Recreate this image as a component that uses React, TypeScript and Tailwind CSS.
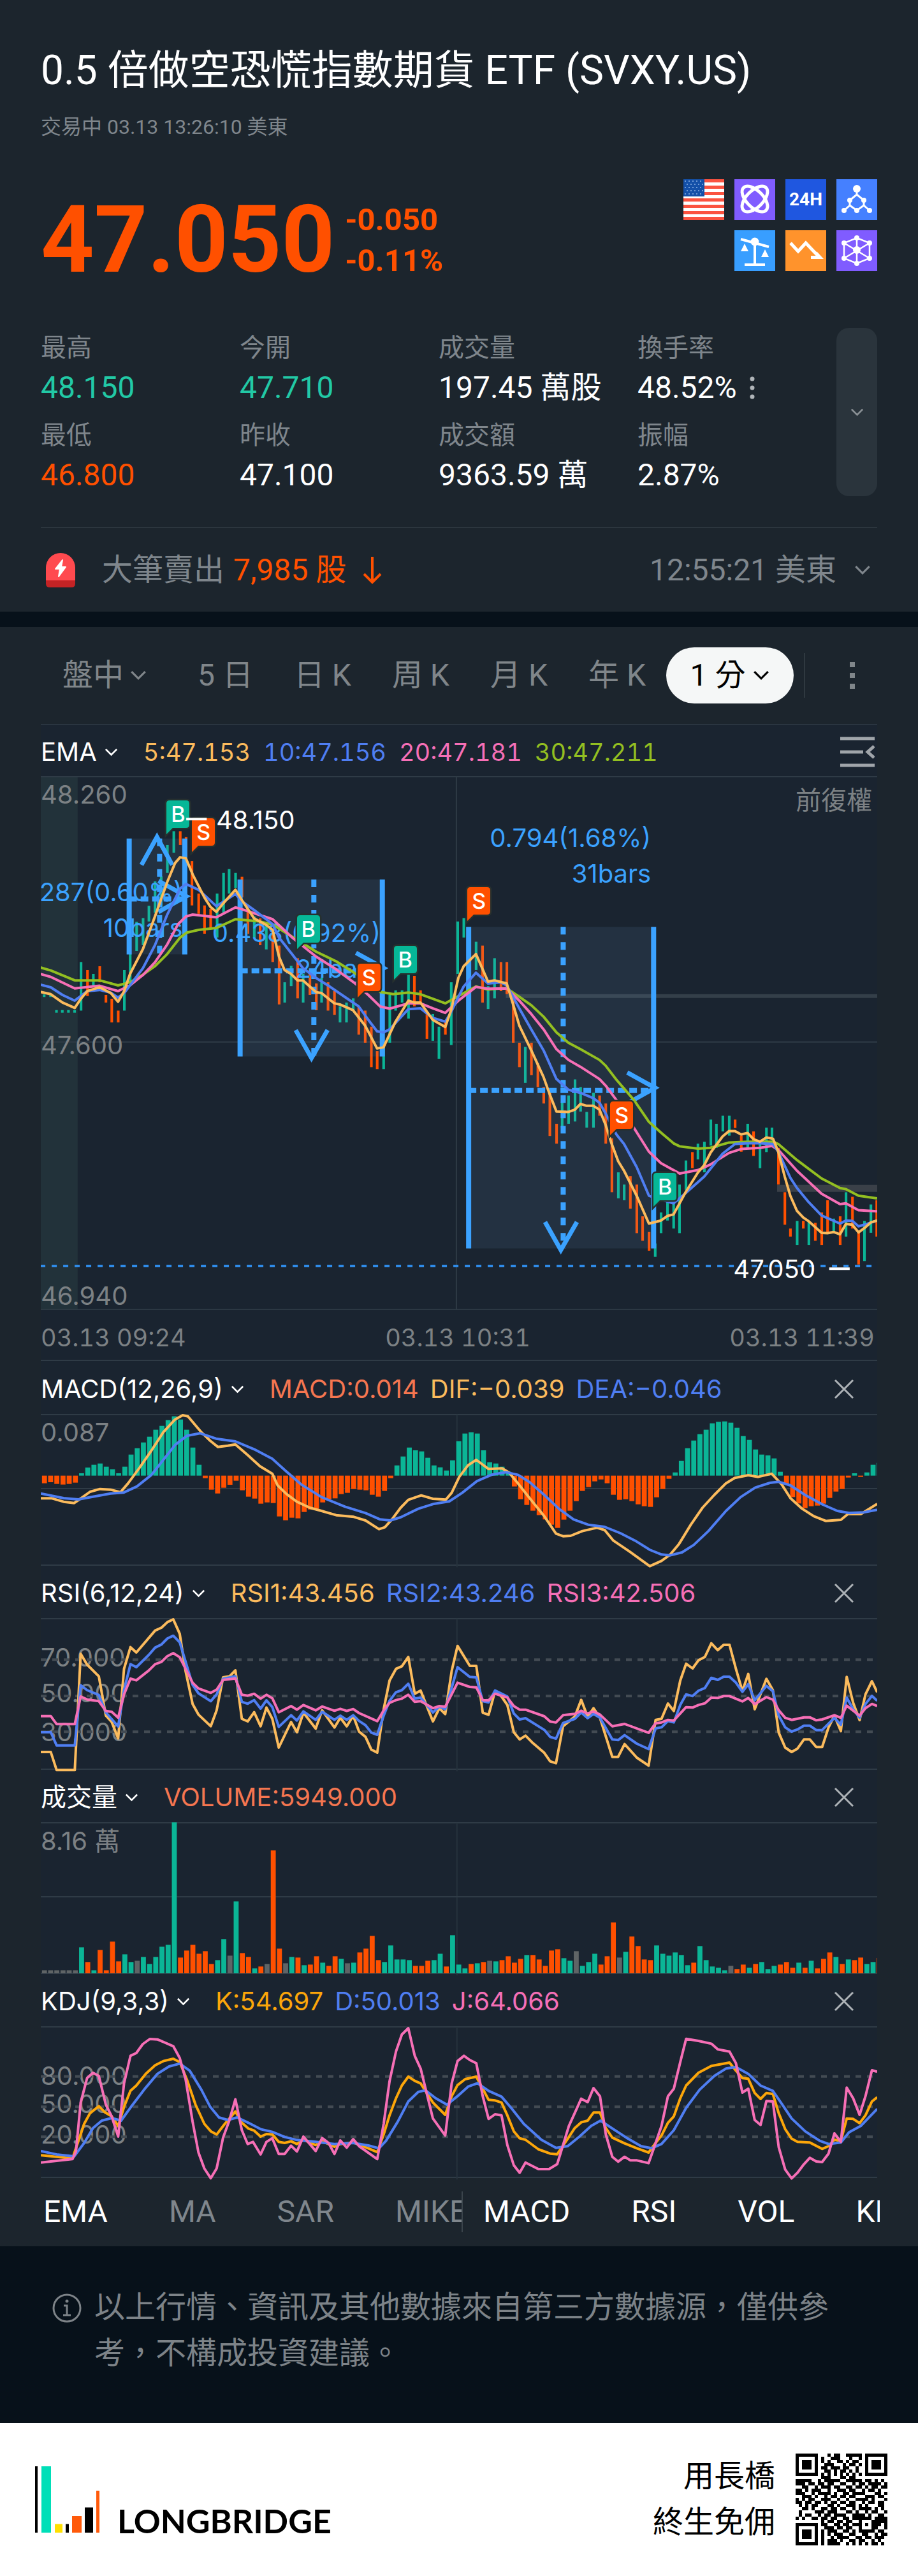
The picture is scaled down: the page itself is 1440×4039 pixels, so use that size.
import { ReactNode } from "react";

const UP = "#0bb596";
const DOWN = "#ff5000";
const FLAT = "#5f6466";
const YELLOW = "#fbbb5d";
const BLUE = "#4f7ef2";
const PINK = "#f66fb6";
const GREEN = "#93bf21";
const ORANGE = "#fca60a";
const MEASURE = "#3ba2ff";
const GRID = "#2f3b46";

// [x, high, low], positive direction first
const upBars: number[][] = [
  [278, 514, 641], [320, 545, 578], [426, 535, 641], [446, 493, 570], [468, 409, 485], [490, 399, 470],
  [510, 367, 408], [531, 303, 385], [552, 290, 370], [573, 208, 281], [595, 172, 228], [743, 335, 450],
  [765, 281, 388], [784, 271, 335], [806, 281, 320], [870, 395, 450], [911, 415, 481], [974, 567, 620],
  [996, 524, 577], [1037, 545, 620], [1100, 555, 620], [1163, 630, 672], [1185, 620, 672], [1208, 609, 640],
  [1312, 735, 794], [1333, 600, 725], [1353, 588, 641], [1375, 588, 620], [1397, 545, 662], [1480, 650, 720],
  [1501, 683, 767], [1543, 567, 731], [1565, 408, 545], [1586, 399, 450], [1628, 461, 535], [1669, 577, 637],
  [1691, 504, 609], [1796, 736, 830], [1922, 880, 948], [1944, 863, 937], [1966, 821, 931], [1985, 841, 905],
  [2006, 906, 947], [2029, 856, 947], [2114, 1064, 1132], [2134, 1096, 1137], [2240, 1250, 1285],
  [2260, 1169, 1223], [2282, 1140, 1190], [2303, 1140, 1211], [2323, 1096, 1223], [2345, 1033, 1110],
  [2386, 989, 1030], [2408, 984, 1064], [2430, 926, 994], [2449, 937, 1000], [2471, 916, 957],
  [2493, 916, 968], [2556, 937, 1000], [2598, 989, 1053], [2620, 947, 1011], [2639, 947, 980],
  [2725, 1191, 1254], [2765, 1191, 1254], [2850, 1185, 1220], [2892, 1116, 1232], [2955, 1191, 1296],
  [2977, 1148, 1222],
];
const downBars: number[][] = [
  [300, 535, 603], [342, 525, 567], [363, 600, 620], [383, 610, 672], [405, 641, 672], [617, 172, 208],
  [637, 187, 240], [657, 250, 366], [680, 335, 388], [700, 366, 440], [721, 375, 425], [828, 291, 345],
  [848, 375, 440], [890, 400, 470], [933, 440, 514], [955, 471, 625], [1018, 504, 609], [1060, 535, 600],
  [1082, 570, 640], [1122, 567, 641], [1144, 590, 652], [1227, 630, 704], [1249, 641, 725], [1270, 683, 789],
  [1290, 747, 794], [1417, 550, 630], [1438, 588, 620], [1460, 645, 715], [1523, 670, 704], [1650, 471, 620],
  [1713, 514, 590], [1733, 514, 598], [1755, 609, 725], [1776, 725, 789], [1817, 725, 810], [1839, 779, 841],
  [1859, 841, 884], [1880, 850, 969], [1903, 937, 989], [2050, 863, 916], [2071, 884, 989],
  [2092, 975, 1116], [2155, 1074, 1159], [2177, 1096, 1223], [2197, 1179, 1243], [2219, 1220, 1269],
  [2367, 1011, 1053], [2513, 926, 948], [2534, 968, 1010], [2576, 957, 1021], [2661, 1000, 1096],
  [2683, 1116, 1201], [2702, 1211, 1232], [2746, 1191, 1211], [2787, 1196, 1243], [2809, 1169, 1254],
  [2829, 1137, 1222], [2872, 1179, 1254], [2914, 1128, 1211], [2935, 1222, 1305], [2997, 1137, 1232],
];

const ema5 =
  "139,592 175,598 215,620 257,634 278,610 300,590 342,580 380,595 405,618 426,590 446,545 490,480 531,395 573,305 600,255 617,240 637,243 660,285 700,345 721,370 741,383 765,360 806,325 828,352 870,400 911,417 933,430 955,500 974,535 996,545 1018,562 1037,562 1082,593 1100,595 1144,622 1163,625 1208,640 1249,680 1290,740 1312,737 1353,670 1397,615 1417,620 1438,620 1480,665 1523,684 1543,640 1568,555 1586,525 1628,493 1669,565 1691,562 1733,570 1755,625 1776,680 1817,745 1859,815 1880,860 1903,905 1944,906 1966,900 1985,885 2006,890 2029,890 2050,900 2071,940 2092,990 2114,1035 2134,1060 2177,1125 2219,1198 2260,1190 2282,1178 2303,1174 2345,1115 2386,1065 2408,1045 2430,1012 2471,970 2493,956 2513,956 2534,965 2556,961 2576,977 2598,984 2620,973 2643,976 2661,1010 2683,1075 2702,1125 2725,1165 2746,1182 2765,1192 2809,1222 2829,1223 2850,1220 2872,1226 2892,1199 2914,1201 2935,1221 2955,1210 2977,1195 2999,1190";
const ema10 =
  "139,573 175,580 215,600 257,615 300,590 342,587 380,594 405,607 426,595 490,530 531,470 573,390 617,322 637,310 680,325 741,368 806,336 828,355 870,378 933,415 955,450 996,490 1037,530 1082,556 1122,575 1185,608 1227,630 1260,665 1290,695 1312,698 1333,690 1397,637 1438,635 1480,660 1523,670 1543,645 1568,605 1586,578 1628,542 1669,570 1713,567 1733,575 1776,635 1817,690 1859,745 1903,820 1944,848 1985,856 2029,870 2050,882 2071,910 2108,965 2134,990 2177,1050 2219,1125 2260,1135 2303,1145 2345,1118 2408,1075 2471,1015 2513,990 2556,988 2598,988 2643,990 2661,1010 2702,1078 2725,1105 2765,1142 2809,1177 2872,1198 2892,1190 2914,1191 2935,1205 2955,1201 2999,1190";
const ema20 =
  "139,545 175,553 257,583 342,576 405,590 446,575 490,548 531,515 573,468 610,415 637,395 660,390 741,397 806,371 828,376 933,402 1000,450 1082,500 1144,530 1215,570 1260,600 1300,630 1333,636 1397,622 1438,622 1480,635 1523,647 1568,615 1628,579 1669,584 1733,583 1776,615 1817,650 1859,690 1903,742 1944,770 1985,788 2050,820 2071,837 2108,875 2168,948 2219,1010 2260,1040 2324,1067 2387,1058 2428,1044 2493,1013 2534,1003 2598,1000 2639,995 2661,1005 2725,1060 2809,1120 2872,1147 2892,1145 2935,1163 2999,1166";
const ema30 =
  "139,528 175,536 257,562 342,562 405,575 446,567 490,547 531,525 573,493 617,450 640,437 680,430 741,425 806,402 890,408 933,416 1000,448 1082,487 1150,512 1208,540 1300,592 1345,598 1397,594 1438,598 1523,622 1568,603 1628,578 1669,586 1713,583 1733,583 1776,605 1817,627 1859,657 1903,698 1944,725 1985,742 2050,770 2071,785 2108,822 2168,875 2219,932 2260,960 2303,988 2324,996 2387,1002 2428,1000 2493,986 2556,984 2643,984 2661,990 2725,1032 2809,1080 2872,1105 2892,1108 2935,1125 2999,1132";

const macdBars = [
  585, 580, 588, 591, 588, 582, 538, 511, 498, 492, 507, 519, 538, 507, 450, 420, 393, 366, 333, 315, 288, 270,
  285, 333, 417, 498, 561, 615, 633, 606, 592, 573, 618, 648, 657, 681, 675, 678, 741, 759, 747, 750, 720, 708,
  705, 675, 660, 656, 636, 630, 612, 615, 618, 639, 648, 621, 561, 501, 459, 417, 430, 435, 465, 501, 510, 525,
  477, 387, 351, 345, 351, 430, 486, 492, 507, 530, 600, 660, 687, 714, 735, 755, 780, 795, 756, 714, 669, 621,
  603, 576, 567, 585, 639, 663, 660, 669, 684, 693, 696, 651, 612, 564, 534, 480, 420, 384, 354, 333, 303, 296,
  294, 300, 324, 363, 381, 426, 450, 454, 468, 531, 590, 650, 680, 702, 693, 690, 681, 654, 624, 612, 558, 538,
  555, 534, 498, 489,
];
const dif =
  "71,656 90,656 110,672 128,678 140,655 155,625 172,612 190,615 207,627 220,585 240,510 260,430 280,345 300,285 313,265 322,270 345,345 360,385 373,414 390,408 403,402 425,455 445,505 466,540 475,595 490,635 508,672 530,700 550,715 575,735 605,743 625,760 648,801 658,792 670,755 685,700 698,663 720,642 740,658 762,662 772,630 785,555 800,500 814,475 835,518 858,515 870,535 885,585 905,655 930,740 950,822 962,834 975,832 995,810 1020,794 1033,805 1048,855 1075,905 1110,975 1130,950 1145,920 1160,870 1180,780 1200,700 1220,640 1240,585 1255,560 1278,547 1295,555 1318,540 1335,590 1350,655 1370,705 1390,740 1410,762 1436,757 1448,730 1470,730 1498,682";
const dea =
  "71,633 110,655 135,661 160,648 190,633 212,629 235,600 260,545 280,475 300,405 320,362 343,350 370,375 403,388 435,425 466,470 490,530 515,590 550,650 590,695 625,725 650,755 667,760 685,745 715,705 740,683 768,670 790,630 815,575 840,545 865,533 885,545 905,580 930,640 955,705 980,755 1005,780 1033,790 1060,820 1085,855 1110,898 1130,920 1145,924 1165,910 1185,875 1210,810 1240,715 1265,650 1290,605 1315,583 1330,578 1350,595 1375,640 1405,685 1430,715 1450,725 1475,722 1498,710";

const rsi6 =
  "71,861 88,861 98,946 129,946 139,399 150,450 170,505 182,690 192,720 203,797 213,470 224,368 234,393 266,290 277,276 287,250 297,237 308,305 318,480 330,635 340,685 361,740 371,665 382,510 393,505 403,477 414,705 424,717 435,674 446,740 456,652 466,705 477,840 498,720 508,768 519,676 540,751 551,665 572,746 582,700 593,740 604,690 614,765 625,790 635,850 645,864 656,660 666,525 677,470 687,458 698,414 709,587 719,572 740,717 751,655 761,683 772,480 782,362 803,456 814,456 825,676 835,686 846,575 857,600 867,640 878,768 888,802 898,784 909,815 930,865 940,905 950,914 962,740 982,695 993,616 1004,696 1014,655 1025,700 1046,884 1056,884 1067,824 1088,888 1108,925 1120,710 1130,705 1141,633 1151,668 1162,525 1172,446 1183,468 1193,430 1204,414 1215,350 1226,382 1236,357 1246,357 1257,470 1268,575 1278,494 1289,660 1309,517 1320,570 1330,770 1341,840 1352,861 1362,845 1373,802 1383,802 1394,838 1404,838 1415,745 1425,690 1436,763 1446,508 1457,630 1468,711 1478,590 1489,528 1498,580";
const rsi12 =
  "71,768 88,768 98,830 129,830 139,547 150,570 170,593 182,675 203,741 213,570 224,448 234,462 255,405 266,370 277,355 287,327 297,314 308,345 330,545 340,585 361,622 371,590 382,517 403,505 414,625 424,634 435,617 446,657 456,618 466,650 477,743 498,688 508,713 519,670 540,710 551,672 572,710 582,690 593,710 604,688 614,715 625,735 635,770 645,780 656,690 666,620 677,580 687,570 698,540 709,610 719,605 740,675 751,648 761,660 772,560 782,462 803,508 814,510 825,622 835,628 846,572 867,600 878,680 888,708 898,702 930,757 940,790 950,798 962,725 982,705 993,675 1004,702 1014,682 1025,700 1046,802 1056,805 1067,782 1088,822 1108,847 1120,750 1130,745 1141,715 1151,722 1162,640 1172,590 1183,598 1193,573 1204,560 1215,512 1226,522 1236,507 1246,507 1257,535 1268,578 1278,542 1289,618 1309,550 1320,575 1330,690 1341,745 1352,765 1362,755 1373,737 1383,737 1394,758 1404,758 1425,700 1436,733 1446,605 1457,660 1468,700 1478,635 1489,597 1498,620";
const rsi24 =
  "71,692 88,692 98,730 129,730 139,600 150,614 170,622 182,668 192,672 203,700 213,590 224,516 234,524 255,478 266,448 277,437 287,410 297,396 308,415 330,535 340,562 361,583 371,568 382,522 403,515 414,592 424,596 435,587 446,610 456,592 466,608 477,674 498,645 508,662 519,640 540,665 551,647 572,667 582,658 593,668 604,659 614,678 645,716 656,665 666,630 677,617 687,610 698,592 709,625 719,622 740,655 751,645 761,648 772,590 782,535 803,555 814,557 825,617 835,618 846,587 867,605 878,645 888,662 898,662 930,693 940,718 950,722 962,688 982,682 993,667 1004,680 1014,670 1025,685 1046,740 1067,729 1108,771 1120,726 1130,722 1141,710 1151,713 1162,680 1172,650 1183,652 1193,640 1204,632 1215,605 1226,607 1236,598 1246,598 1268,623 1278,607 1289,636 1309,603 1320,615 1330,665 1341,700 1352,710 1373,698 1383,698 1394,712 1404,708 1425,688 1436,700 1446,643 1468,690 1478,655 1489,635 1498,645";

// g = up, r = down, x = unchanged, followed by the bar's top
const volumeBars =
  "x928 x928 x928 x928 x928 x928 g820 r889 g928 r832 r928 r793 r886 g853 g889 x883 g865 g898 g865 g817 g808 g232 r868 r835 r808 r850 r838 r898 g880 g781 x859 g604 r847 r865 g919 r910 x898 r364 r826 x895 g865 r868 g904 r901 r862 g892 r907 r862 g874 x895 g892 r844 r826 r766 r880 g889 g811 g877 g877 g880 r907 r907 r883 g880 g850 r910 g763 g901 g919 r898 g895 r889 x883 g886 r880 r862 r892 r874 g856 r856 r877 r907 r835 r829 g871 g883 x838 g907 g889 g850 r901 r862 r703 x868 g841 r769 r814 r877 r880 g811 g850 g859 g844 g856 g904 r892 g814 g880 g910 g916 g928 x907 r922 r901 g916 r898 g889 g922 g907 r901 r889 r916 g892 r916 g883 r919 r874 r844 g865 r898 g877 r880 r868 g898 g889 r870".split(
    " ",
  );

const kdjK =
  "71,838 125,853 134,780 145,690 155,640 170,607 180,635 192,655 203,700 213,610 224,535 234,510 250,455 266,415 280,395 297,384 308,400 320,480 335,600 350,690 361,725 371,740 385,690 403,632 414,685 425,712 435,722 446,750 456,738 466,740 477,775 487,780 498,772 508,785 519,765 540,790 551,772 572,798 582,785 604,778 625,800 645,823 656,740 666,650 677,570 687,510 698,468 709,488 719,500 740,590 761,648 772,560 782,508 795,480 814,468 825,525 835,577 846,580 857,590 867,650 878,725 888,758 898,765 920,810 940,830 952,833 970,760 982,710 993,683 1004,675 1014,637 1025,637 1035,710 1046,755 1067,782 1088,805 1108,825 1120,780 1130,745 1141,685 1151,655 1162,570 1172,510 1193,450 1215,418 1246,402 1257,440 1268,475 1278,478 1289,545 1299,573 1309,545 1320,550 1330,640 1341,715 1352,760 1362,775 1383,778 1404,808 1415,795 1425,765 1436,770 1446,665 1457,667 1468,687 1478,650 1489,585 1498,565";
const kdjD =
  "71,818 100,835 128,843 145,780 160,710 175,675 192,663 208,675 225,610 250,520 270,455 290,420 308,407 325,440 345,530 360,610 375,660 390,672 406,660 425,685 446,715 466,728 487,752 508,766 540,775 572,785 604,780 630,792 648,805 660,770 680,680 698,585 715,540 727,532 745,570 764,600 782,560 800,515 816,499 835,535 857,562 875,620 895,690 925,765 950,803 970,795 990,750 1010,700 1026,675 1045,710 1070,755 1095,795 1113,805 1130,785 1151,720 1172,615 1195,530 1220,465 1240,430 1257,423 1278,455 1299,510 1320,535 1335,595 1352,665 1375,725 1400,770 1415,785 1436,778 1450,730 1470,700 1498,620";
const kdjJ =
  "71,872 125,856 131,820 139,590 150,475 160,450 170,465 182,600 192,655 203,750 213,500 224,370 234,357 245,315 257,291 270,293 297,325 308,380 318,480 330,680 340,825 350,900 361,946 371,900 382,755 392,680 403,575 414,720 424,785 433,775 446,834 456,775 466,758 477,832 487,832 498,793 508,820 519,750 540,818 551,757 562,780 572,832 582,768 593,802 604,762 614,795 645,856 656,690 666,490 677,350 687,270 698,240 709,370 719,430 740,665 761,745 772,500 782,395 793,370 803,390 814,405 825,560 835,667 846,645 857,650 867,790 878,885 888,920 898,872 920,903 938,903 952,880 962,790 972,700 993,572 1004,588 1014,522 1025,560 1035,740 1046,845 1056,868 1067,845 1077,862 1088,862 1108,875 1120,780 1130,700 1141,560 1151,525 1162,400 1172,290 1193,300 1215,313 1226,340 1246,350 1257,405 1268,543 1278,525 1289,672 1299,695 1309,583 1320,585 1330,800 1341,905 1352,947 1362,920 1373,880 1383,850 1394,867 1404,870 1415,830 1425,735 1436,775 1446,520 1457,570 1468,648 1478,560 1489,438 1498,445";

const qrRows = [
  "11111110001011001111101111111",
  "10000010100111000100101000001",
  "10111010101001101011001011101",
  "10111010011100010110101011101",
  "10111010110111011001001011101",
  "10000010011010110101001000001",
  "11111110101010101010101111111",
  "00000000111000110110000000000",
  "11111001011111001111101101010",
  "11101101101100110010110111101",
  "00110010111011001101101011011",
  "11010111001001110110010110100",
  "11100101111010011011110001101",
  "00111010010110110110001110110",
  "10101100111001001001111010001",
  "11011011010110110110010110110",
  "01010110001101001110101000110",
  "00110100110110110010111101010",
  "01000011101110001101001011001",
  "01011001011011110011110100110",
  "10100110110110011011111101111",
  "00000000101101101100100011111",
  "11111110110011011011101011101",
  "10000010011101101100100011001",
  "10111010101110011010111110110",
  "10111010101011100110011001011",
  "10111010100101111001101101110",
  "10000010101110100110110010100",
  "11111110101111001010101011010",
];

const stats = [
  { label: "最高", value: "48.150", tone: "text-[#22c9a5]" },
  { label: "今開", value: "47.710", tone: "text-[#22c9a5]" },
  { label: "成交量", value: "197.45 萬股", tone: "text-white" },
  { label: "換手率", value: "48.52%", tone: "text-white", more: true },
  { label: "最低", value: "46.800", tone: "text-[#ff5000]" },
  { label: "昨收", value: "47.100", tone: "text-white" },
  { label: "成交額", value: "9363.59 萬", tone: "text-white" },
  { label: "振幅", value: "2.87%", tone: "text-white" },
];

const Chevron = ({ className }: { className: string }) => (
  <svg viewBox="0 0 24 15" className={className} fill="none" stroke="currentColor" strokeWidth="3">
    <path d="M2 2l10 10L22 2" />
  </svg>
);

const Line = ({ points, color }: { points: string; color: string }) => (
  <polyline
    points={points}
    fill="none"
    stroke={color}
    strokeWidth="4"
    strokeLinejoin="round"
    vectorEffect="non-scaling-stroke"
  />
);

const HLine = ({ y, dotted }: { y: number; dotted?: boolean }) => (
  <line
    x1="71"
    x2="1498"
    y1={y}
    y2={y}
    stroke={dotted ? "#434b53" : GRID}
    strokeWidth={dotted ? 4 : 2}
    strokeDasharray={dotted ? "9 9" : undefined}
    vectorEffect="non-scaling-stroke"
  />
);

const AxisLabel = ({ y, children }: { y: number; children: ReactNode }) => (
  <span className="absolute left-0 -translate-y-1/2 text-[40px] leading-10 text-[#7c8184]" style={{ top: y }}>
    {children}
  </span>
);

type LegendValue = { text: string; tone: string };
type LegendProps = { name: string; values: LegendValue[]; children: ReactNode; compact?: boolean };

const Legend = ({ name, values, children, compact }: LegendProps) => (
  <div className="flex h-full items-center justify-between pt-1">
    <div className="flex items-center text-[40px] leading-10 whitespace-nowrap">
      <button type="button" className="flex items-center gap-3 text-white">
        {name}
        <Chevron className="h-[13px] w-[21px]" />
      </button>
      <div className={compact ? "ml-10 flex gap-5 text-[38px] tabular-nums" : "ml-10 flex gap-[18px]"}>
        {values.map((v) => (
          <span key={v.text} className={v.tone}>
            {v.text}
          </span>
        ))}
      </div>
    </div>
    {children}
  </div>
);

const Panel = ({
  name,
  values,
  labels,
  children,
}: {
  name: string;
  values: LegendValue[];
  labels: { y: number; text: string }[];
  children: ReactNode;
}) => (
  <section>
    <div className="h-[84px]">
      <Legend name={name} values={values}>
        <button type="button" aria-label="關閉" className="mr-9 text-[#aeb3b7]">
          <svg viewBox="0 0 32 32" className="size-8" stroke="currentColor" strokeWidth="3">
            <path d="M2 2l28 28M30 2L2 30" />
          </svg>
        </button>
      </Legend>
    </div>
    <div className="relative h-[236px]">
      {labels.map((l) => (
        <AxisLabel key={l.text} y={l.y}>
          {l.text}
        </AxisLabel>
      ))}
      <svg
        viewBox="71 234 1427 708"
        preserveAspectRatio="none"
        className="relative block h-full w-full overflow-x-clip overflow-y-visible"
      >
        <HLine y={234} />
        <HLine y={942} />
        <line x1="781" x2="781" y1="234" y2="952" stroke="#26323d" strokeWidth="2" vectorEffect="non-scaling-stroke" />
        {children}
      </svg>
    </div>
  </section>
);

type MeasureBoxProps = {
  x1: number;
  x2: number;
  y1: number;
  y2: number;
  midX: number;
  midY: number;
  up?: boolean;
};

const MeasureBox = ({ x1, x2, y1, y2, midX, midY, up }: MeasureBoxProps) => (
  <g fill="none" stroke={MEASURE}>
    <rect x={x1} y={y1} width={x2 - x1} height={y2 - y1} fill="#78aadc" fillOpacity="0.1" stroke="none" />
    <path d={`M${x1} ${y1}V${y2}M${x2} ${y1}V${y2}`} strokeWidth="8" vectorEffect="non-scaling-stroke" />
    <path
      d={`M${midX} ${y1}V${y2}`}
      strokeWidth="8"
      strokeDasharray="12 12"
      vectorEffect="non-scaling-stroke"
    />
    <path
      d={`M${x1} ${midY}H${x2}`}
      strokeWidth="8"
      strokeDasharray="12 6"
      vectorEffect="non-scaling-stroke"
    />
    <path
      d={
        up
          ? `M${midX - 62} ${y1 + 69}L${midX - 9} ${y1 - 4}L${midX + 43} ${y1 + 69}`
          : `M${midX - 62} ${y2 - 69}L${midX - 8} ${y2 + 4}L${midX + 47} ${y2 - 69}`
      }
      strokeWidth="7"
      vectorEffect="non-scaling-stroke"
    />
    <path
      d={`M${x2 - 90} ${midY - 47}L${x2 + 5} ${midY - 7}L${x2 - 90} ${midY + 34}`}
      strokeWidth="7"
      vectorEffect="non-scaling-stroke"
    />
  </g>
);

// price chart plot area, used to turn plot coordinates into percentages
const plot = { x: 141, y: 28, w: 2858, h: 1396 };
const left = (x: number) => `${((x - plot.x) / plot.w) * 100}%`;
const right = (x: number) => `${100 - ((x - plot.x) / plot.w) * 100}%`;
const top = (y: number) => `${((y - plot.y) / plot.h) * 100}%`;

const trades = [
  { side: "B", x: 571, y: 91 },
  { side: "S", x: 658, y: 138 },
  { side: "B", x: 1016, y: 391 },
  { side: "S", x: 1223, y: 518 },
  { side: "B", x: 1347, y: 472 },
  { side: "S", x: 1599, y: 318 },
  { side: "S", x: 2087, y: 879 },
  { side: "B", x: 2235, y: 1065 },
];

const measures = [
  { range: "0.287(0.60%)", bars: "10bars", x: 626, y: 331 },
  { range: "0.438(0.92%)", bars: "24bars", x: 1302, y: 438 },
  { range: "0.794(1.68%)", bars: "31bars", x: 2226, y: 190 },
];

const PriceChart = () => (
  <div className="relative h-[837px] overflow-hidden">
    <svg
      viewBox={`${plot.x} ${plot.y} ${plot.w} ${plot.h}`}
      preserveAspectRatio="none"
      className="absolute inset-0 h-full w-full"
    >
      <rect x="139" y="28" width="128" height="1400" fill="#22323a" />
      <g stroke={GRID} strokeWidth="2">
        <path d="M139 29H3000M139 723H3000M139 1423H3000" vectorEffect="non-scaling-stroke" />
        <path d="M1561 28V1430" vectorEffect="non-scaling-stroke" />
      </g>
    </svg>
    <AxisLabel y={29}>48.260</AxisLabel>
    <AxisLabel y={422}>47.600</AxisLabel>
    <AxisLabel y={815}>46.940</AxisLabel>
    <span className="absolute top-[10px] right-2 text-[40px] leading-[56px] text-[#7c8184]">前復權</span>
    <svg
      viewBox={`${plot.x} ${plot.y} ${plot.w} ${plot.h}`}
      preserveAspectRatio="none"
      className="absolute inset-0 h-full w-full"
    >
      <path d="M1730 603H3000" stroke="#343f49" strokeWidth="6" vectorEffect="non-scaling-stroke" />
      <path d="M2657 1106H3000" stroke="#3a4048" strokeWidth="11" vectorEffect="non-scaling-stroke" />
      <path
        d="M139 1309H3000"
        stroke="#2f8be8"
        strokeWidth="4"
        strokeDasharray="8 10"
        vectorEffect="non-scaling-stroke"
      />
      <path
        d="M148 602h9M170 602h9M190 643h9M210 643h9M231 643h9M252 643h9"
        stroke={UP}
        strokeWidth="4"
        vectorEffect="non-scaling-stroke"
      />
      {upBars.map(([x, high, low]) => (
        <rect key={x} x={x - 4} y={high} width="9" height={low - high} fill={UP} />
      ))}
      {downBars.map(([x, high, low]) => (
        <rect key={x} x={x - 4} y={high} width="9" height={low - high} fill={DOWN} />
      ))}
      <MeasureBox x1={443} x2={633} y1={191} y2={494} midX={547} midY={349} up />
      <MeasureBox x1={822} x2={1308} y1={298} y2={761} midX={1074} midY={537} />
      <MeasureBox x1={1603} x2={2235} y1={422} y2={1263} midX={1926} midY={850} />
    </svg>
    {measures.map((m) => (
      <p
        key={m.bars}
        className="absolute -mt-7 text-right text-[40px] leading-14 whitespace-nowrap text-[#3ba2ff]"
        style={{ right: right(m.x), top: top(m.y) }}
      >
        {m.range}
        <br />
        {m.bars}
      </p>
    ))}
    <svg
      viewBox={`${plot.x} ${plot.y} ${plot.w} ${plot.h}`}
      preserveAspectRatio="none"
      className="absolute inset-0 h-full w-full"
    >
      <Line points={ema30} color={GREEN} />
      <Line points={ema20} color={PINK} />
      <Line points={ema10} color={BLUE} />
      <Line points={ema5} color={YELLOW} />
    </svg>
    {trades.map((t) => (
      <div key={t.x} className="absolute h-14 w-9" style={{ left: left(t.x), top: top(t.y) }}>
        <svg viewBox="0 0 36 56" className="absolute inset-0 overflow-visible">
          <path
            d="M5 0H31Q36 0 36 5V38Q36 43 31 43H10L0 53V5Q0 0 5 0Z"
            fill={t.side === "B" ? "#06b797" : DOWN}
            stroke="#26302f"
            strokeWidth="5"
            paintOrder="stroke"
          />
        </svg>
        <span className="relative block text-center text-[34px] leading-[44px] font-medium text-white">{t.side}</span>
      </div>
    ))}
    <svg
      viewBox={`${plot.x} ${plot.y} ${plot.w} ${plot.h}`}
      preserveAspectRatio="none"
      className="absolute inset-0 h-full w-full"
    >
      <path d="M638 140h70M2835 1316h70" stroke="#fff" strokeWidth="4" vectorEffect="non-scaling-stroke" />
    </svg>
    <span
      className="absolute -translate-y-1/2 text-[40px] leading-10 text-white"
      style={{ left: left(740), top: top(143) }}
    >
      48.150
    </span>
    <span
      className="absolute -translate-y-1/2 text-[40px] leading-10 text-white"
      style={{ right: right(2788), top: top(1318) }}
    >
      47.050
    </span>
  </div>
);

const tile = "flex size-16 items-center justify-center";

const Tags = () => (
  <div className="grid grid-cols-4 gap-4">
    <div className={tile}>
      <svg viewBox="0 0 64 64" className="size-16">
        <rect width="64" height="64" fill="#fff" />
        {[0, 10, 20, 30, 40, 50, 59].map((y) => (
          <rect key={y} y={y} width="64" height="5" fill="#fb5340" />
        ))}
        <rect width="33" height="27" fill="#1450a8" />
        {[3, 8, 13, 18, 23].map((y, row) =>
          [3, 9, 15, 21, 27].map((x) => (
            <circle key={`${x}-${y}`} cx={x + (row % 2) * 3} cy={y} r="1" fill="#8fb4e6" />
          )),
        )}
      </svg>
    </div>
    <div className={`${tile} bg-[#805cff]`}>
      <svg viewBox="0 0 64 64" className="size-16" fill="none" stroke="#fff" strokeWidth="5">
        <ellipse cx="32" cy="31" rx="25" ry="13" transform="rotate(45 32 31)" />
        <ellipse cx="32" cy="31" rx="25" ry="13" transform="rotate(-45 32 31)" />
      </svg>
    </div>
    <div className={`${tile} bg-[#1f57e0]`}>
      <span className="text-[28px] leading-8 font-bold text-white">24H</span>
    </div>
    <div className={`${tile} bg-[#4580ff]`}>
      <svg viewBox="0 0 64 64" className="size-16" fill="#fff">
        <path
          d="M32 14V26M21 33L32 24L43 33M21 33V41L12 49M21 41L32 49L43 41M43 33V41L52 49"
          fill="none"
          stroke="#fff"
          strokeWidth="3"
        />
        <circle cx="32" cy="15" r="6" />
        <circle cx="21" cy="33" r="4" />
        <circle cx="43" cy="33" r="4" />
        <circle cx="12" cy="49" r="4" />
        <circle cx="32" cy="49" r="4" />
        <circle cx="52" cy="49" r="4" />
      </svg>
    </div>
    <div className={`${tile} col-start-2 bg-[#389eff]`}>
      <svg viewBox="0 0 64 64" className="size-16" fill="#fff">
        <path d="M10 14L54 26" stroke="#fff" strokeWidth="4" />
        <path d="M32 18V54M16 54H48" stroke="#fff" strokeWidth="4" />
        <circle cx="32" cy="18" r="6.5" />
        <path d="M16 21L22 33H10ZM48 30L54 42H42Z" />
      </svg>
    </div>
    <div className={`${tile} bg-[#ff932c]`}>
      <svg viewBox="0 0 64 64" className="size-16" fill="none" stroke="#fff" strokeWidth="5">
        <path d="M8 20L20 33L32 20L53 42" />
        <path d="M40 40H50L49 33L60 45H40Z" fill="#fff" stroke="none" />
      </svg>
    </div>
    <div className={`${tile} bg-[#805cff]`}>
      <svg viewBox="0 0 64 64" className="size-16" fill="#fff">
        <path
          d="M32 12L52 20V44L32 52L12 44V20ZM32 12V52M12 20L52 44M52 20L12 44"
          fill="none"
          stroke="#fff"
          strokeWidth="2.5"
        />
        <circle cx="32" cy="31" r="6" />
        <circle cx="32" cy="12" r="4" />
        <circle cx="52" cy="20" r="4" />
        <circle cx="52" cy="44" r="4" />
        <circle cx="32" cy="52" r="4" />
        <circle cx="12" cy="44" r="4" />
        <circle cx="12" cy="20" r="4" />
      </svg>
    </div>
  </div>
);

const Quote = () => (
  <header className="px-16 pt-[71px]">
    <h1 className="text-[64px] leading-20 text-white">0.5 倍做空恐慌指數期貨 ETF (SVXY.US)</h1>
    <p className="mt-6 text-[32px] leading-12 text-[#7f868c]">交易中 03.13 13:26:10 美東</p>

    <div className="mt-[58px] flex items-start justify-between">
      <div className="mt-6 flex items-center gap-4 font-bold text-[#ff5000]">
        <span className="text-[146px] leading-[144px]">47.050</span>
        <span className="text-[49px] leading-16">
          -0.050
          <br />
          -0.11%
        </span>
      </div>
      <Tags />
    </div>

    <div className="mt-[65px] flex">
      <dl className="grid flex-1 grid-cols-4 gap-y-[18px] pt-2">
        {stats.map((s) => (
          <div key={s.label}>
            <dt className="text-[40px] leading-12 text-[#7f868c]">{s.label}</dt>
            <dd className={`mt-[6px] flex items-center text-[48px] leading-16 whitespace-nowrap ${s.tone}`}>
              {s.value}
              {s.more && (
                <svg viewBox="0 0 8 36" className="ml-5 h-9 w-2" fill="#b0b5b9">
                  <circle cx="4" cy="4" r="3.5" />
                  <circle cx="4" cy="18" r="3.5" />
                  <circle cx="4" cy="32" r="3.5" />
                </svg>
              )}
            </dd>
          </div>
        ))}
      </dl>
      <button
        type="button"
        aria-label="展開"
        className="flex h-[264px] w-16 items-center justify-center rounded-[20px] bg-[#2a343c] text-[#8b9196]"
      >
        <Chevron className="h-[13px] w-[21px]" />
      </button>
    </div>

    <div className="mt-12 flex h-[133px] items-center border-t-2 border-[#2c363e] text-[48px] leading-16 text-[#7f868c]">
      <svg viewBox="0 0 46 54" className="ml-2 h-[54px] w-[46px]">
        <path d="M0 23a23 23 0 0 1 46 0V44H0Z" fill="#ff4a4f" />
        <path d="M0 43H46V48Q46 54 40 54H6Q0 54 0 48Z" fill="#c42325" />
        <path d="M26 11L15 25h7l-2 12L31 22h-7Z" fill="#fff" stroke="#fff" strokeWidth="2" strokeLinejoin="round" />
      </svg>
      <span className="ml-[42px]">大筆賣出</span>
      <span className="ml-[14px] text-[#ff5000]">7,985 股</span>
      <svg viewBox="0 0 30 44" className="ml-[26px] h-11 w-[30px]" fill="none" stroke="#ff5000" strokeWidth="4">
        <path d="M15 1V41M2 28L15 41L28 28" />
      </svg>
      <span className="ml-auto">12:55:21 美東</span>
      <Chevron className="mr-[10px] ml-7 h-4 w-[26px]" />
    </div>
  </header>
);

const Tabs = () => (
  <nav className="mb-8 flex h-[88px] items-center gap-16 pl-[34px] text-[48px] leading-16 whitespace-nowrap text-[#80868a]">
    <button type="button" className="mr-4 flex items-center gap-[10px]">
      盤中
      <Chevron className="h-4 w-[26px]" />
    </button>
    {["5 日", "日 K", "周 K", "月 K", "年 K"].map((t) => (
      <button type="button" key={t}>
        {t}
      </button>
    ))}
    <button
      type="button"
      className="-ml-8 flex h-[88px] w-[200px] items-center justify-center gap-3 rounded-full bg-[#f5f7f7] text-black"
    >
      1 分
      <Chevron className="h-4 w-[26px]" />
    </button>
    <div className="-ml-12 h-[70px] w-[2px] bg-[#2f3940]" />
    <button type="button" aria-label="更多" className="ml-[6px]">
      <svg viewBox="0 0 8 42" className="h-[42px] w-2" fill="#80868a">
        <path d="M0 0h8v8H0zM0 17h8v8H0zM0 34h8v8H0z" />
      </svg>
    </button>
  </nav>
);

const barX = (i: number) => 73 + i * 10.55;

const Charts = () => (
  <div className="bg-[#1a2430] font-['Inter','Noto_Sans_CJK_TC',sans-serif]">
    <div className="h-[82px] border-t-2 border-[#2a3540]">
      <Legend
        name="EMA"
        compact
        values={[
          { text: "5:47.153", tone: "text-[#fbbb5d]" },
          { text: "10:47.156", tone: "text-[#4f7ef2]" },
          { text: "20:47.181", tone: "text-[#f66fb6]" },
          { text: "30:47.211", tone: "text-[#93bf21]" },
        ]}
      >
        <button type="button" aria-label="指標列表" className="mr-1 text-[#a0a5aa]">
          <svg viewBox="0 0 54 48" className="h-12 w-[54px]" fill="none" stroke="currentColor" strokeWidth="5">
            <path d="M0 3H54M0 24H36M0 45H54M53 15L43 24L53 33" />
          </svg>
        </button>
      </Legend>
    </div>
    <PriceChart />
    <div className="flex h-20 items-center justify-between border-b-2 border-[#2f3b46] pt-2 pr-1 text-[38px] leading-10 text-[#7c8184] tabular-nums">
      <span>03.13 09:24</span>
      <span>03.13 10:31</span>
      <span>03.13 11:39</span>
    </div>

    <Panel
      name="MACD(12,26,9)"
      values={[
        { text: "MACD:0.014", tone: "text-[#f57650]" },
        { text: "DIF:−0.039", tone: "text-[#fbbb5d]" },
        { text: "DEA:−0.046", tone: "text-[#4f7ef2]" },
      ]}
      labels={[{ y: 28, text: "0.087" }]}
    >
      <g transform="translate(0 -28)">
        <HLine y={610} />
        {macdBars.map((y, i) => (
          <rect
            key={i}
            x={barX(i)}
            y={Math.min(y, 549)}
            width="8.5"
            height={Math.abs(y - 549)}
            fill={y < 549 ? UP : DOWN}
          />
        ))}
        <Line points={dif} color={YELLOW} />
        <Line points={dea} color={BLUE} />
      </g>
    </Panel>

    <Panel
      name="RSI(6,12,24)"
      values={[
        { text: "RSI1:43.456", tone: "text-[#fbbb5d]" },
        { text: "RSI2:43.246", tone: "text-[#4f7ef2]" },
        { text: "RSI3:42.506", tone: "text-[#f66fb6]" },
      ]}
      labels={[
        { y: 61, text: "70.000" },
        { y: 117, text: "50.000" },
        { y: 178, text: "30.000" },
      ]}
    >
      <HLine y={427} dotted />
      <HLine y={598} dotted />
      <HLine y={766} dotted />
      <Line points={rsi6} color={YELLOW} />
      <Line points={rsi12} color={BLUE} />
      <Line points={rsi24} color={PINK} />
    </Panel>

    <Panel
      name="成交量"
      values={[{ text: "VOLUME:5949.000", tone: "text-[#f57650]" }]}
      labels={[{ y: 29, text: "8.16 萬" }]}
    >
      <HLine y={582} />
      {volumeBars.map((bar, i) => {
        const y = Number(bar.slice(1));
        const color = bar[0] === "g" ? UP : bar[0] === "r" ? DOWN : FLAT;
        return <rect key={i} x={barX(i)} y={y} width="8.5" height={942 - y} fill={color} />;
      })}
    </Panel>

    <Panel
      name="KDJ(9,3,3)"
      values={[
        { text: "K:54.697", tone: "text-[#fca60a]" },
        { text: "D:50.013", tone: "text-[#4f7ef2]" },
        { text: "J:64.066", tone: "text-[#f66fb6]" },
      ]}
      labels={[
        { y: 77, text: "80.000" },
        { y: 121, text: "50.000" },
        { y: 169, text: "20.000" },
      ]}
    >
      <HLine y={467} dotted />
      <HLine y={610} dotted />
      <HLine y={751} dotted />
      <Line points={kdjK} color={ORANGE} />
      <Line points={kdjD} color={BLUE} />
      <Line points={kdjJ} color={PINK} />
    </Panel>
  </div>
);

const IndicatorBar = () => (
  <div className="-mr-1 flex h-[108px] items-center text-[48px] leading-16">
    <div className="flex w-[662px] shrink-0 gap-24 overflow-hidden border-r-2 border-[#3a444b] pl-1 text-[#7f868c]">
      <button type="button" className="text-white">
        EMA
      </button>
      <button type="button">MA</button>
      <button type="button">SAR</button>
      <button type="button">MIKE</button>
    </div>
    <div className="flex flex-1 gap-24 overflow-hidden pl-8 text-white">
      <button type="button">MACD</button>
      <button type="button">RSI</button>
      <button type="button">VOL</button>
      <button type="button">KDJ</button>
    </div>
  </div>
);

const Brand = () => (
  <footer className="flex items-start justify-between bg-white pt-12 pr-12 pb-12 pl-[54px] text-black">
    <div className="mt-5 flex items-end gap-[26px]">
      <svg viewBox="0 0 104 100" preserveAspectRatio="none" className="size-[104px]">
        <path d="M1 0h4v100H1zM49 87h5v13h-5zM79 62h13v38H79z" fill="#000" />
        <path d="M11 0h15v100H11z" fill="#00dfb8" />
        <path d="M32 87h12v13H32z" fill="#ffe000" />
        <path d="M59 75h15v25H59zM97 37h5v63h-5z" fill="#ff5a0a" />
      </svg>
      <span className="-mb-[3px] font-['Lato',sans-serif] text-[52px] leading-[44px] font-bold">LONGBRIDGE</span>
    </div>
    <div className="flex items-center gap-8">
      <p className="text-right text-[48px] leading-[72px]">
        用長橋
        <br />
        終生免佣
      </p>
      <svg viewBox="0 0 29 29" className="size-36" shapeRendering="crispEdges">
        {qrRows.map((row, y) =>
          row.split("").map((bit, x) => bit === "1" && <rect key={`${x}-${y}`} x={x} y={y} width="1" height="1" />),
        )}
      </svg>
    </div>
  </footer>
);

export default function App() {
  return (
    <main className="bg-[#1c252d] font-['Roboto','Noto_Sans_CJK_TC',sans-serif]">
      <Quote />
      <div className="h-6 bg-[#07111a]" />
      <div className="px-16 pt-8">
        <Tabs />
        <Charts />
        <IndicatorBar />
      </div>
      <div className="flex items-start gap-5 bg-[#07111a] pt-[60px] pr-24 pb-[73px] pl-[82px] text-[48px] leading-[72px] text-[#7d8388]">
        <svg viewBox="0 0 46 46" className="mt-[14px] size-[46px] shrink-0" fill="none" stroke="currentColor" strokeWidth="3">
          <circle cx="23" cy="23" r="21" />
          <path d="M18 19h5v14M17 34h12" />
          <circle cx="23" cy="12" r="2.5" fill="currentColor" stroke="none" />
        </svg>
        <p>以上行情、資訊及其他數據來自第三方數據源，僅供參考，不構成投資建議。</p>
      </div>
      <Brand />
    </main>
  );
}
